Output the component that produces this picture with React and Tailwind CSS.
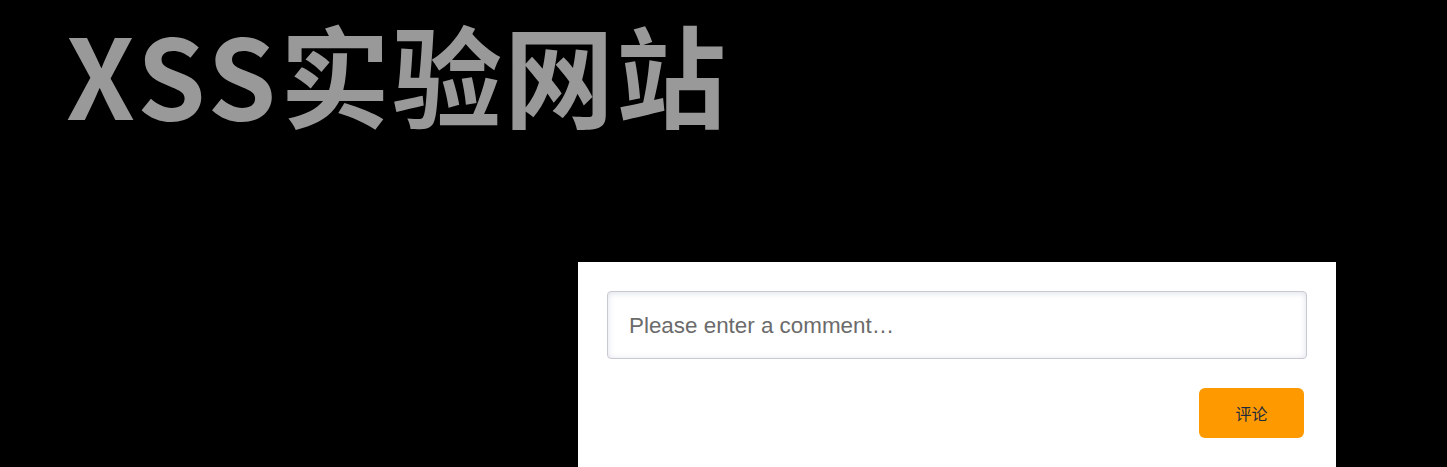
import React from "react";

export default function App() {
  return (
    <div className="min-h-[467px] overflow-hidden bg-black">
      <h1
        className="ml-[66px] pt-[2px] text-[110px] font-bold leading-[140px] tracking-[2px] text-[#999999]"
        style={{ fontFamily: '"Noto Sans CJK SC", "Noto Sans", sans-serif' }}
      >
        <span className="tracking-[4px]">XSS</span>实验网站
      </h1>
      <div className="ml-[578px] mt-[120px] w-[758px] bg-white px-[29px] pt-[29px] pb-[40px]">
        <input
          type="text"
          placeholder="Please enter a comment…"
          className="block h-[68px] w-[700px] rounded-[4px] border border-[#c8cad2] bg-white px-[21px] pt-[2px] text-[22.4px] text-[#333] shadow-[inset_0_1px_6px_rgba(120,130,170,0.25)] outline-none placeholder:text-[#6b6b6b]"
          style={{ fontFamily: '"Liberation Sans", Arial, sans-serif' }}
        />
        <div className="mt-[29px] flex justify-end pr-[3px]">
          <button
            className="h-[50px] w-[105px] rounded-[6px] bg-[#ff9900] text-[16px] text-[#1e2b3c]"
            style={{ fontFamily: '"Noto Sans CJK SC", "Noto Sans", sans-serif' }}
          >
            评论
          </button>
        </div>
      </div>
    </div>
  );
}
